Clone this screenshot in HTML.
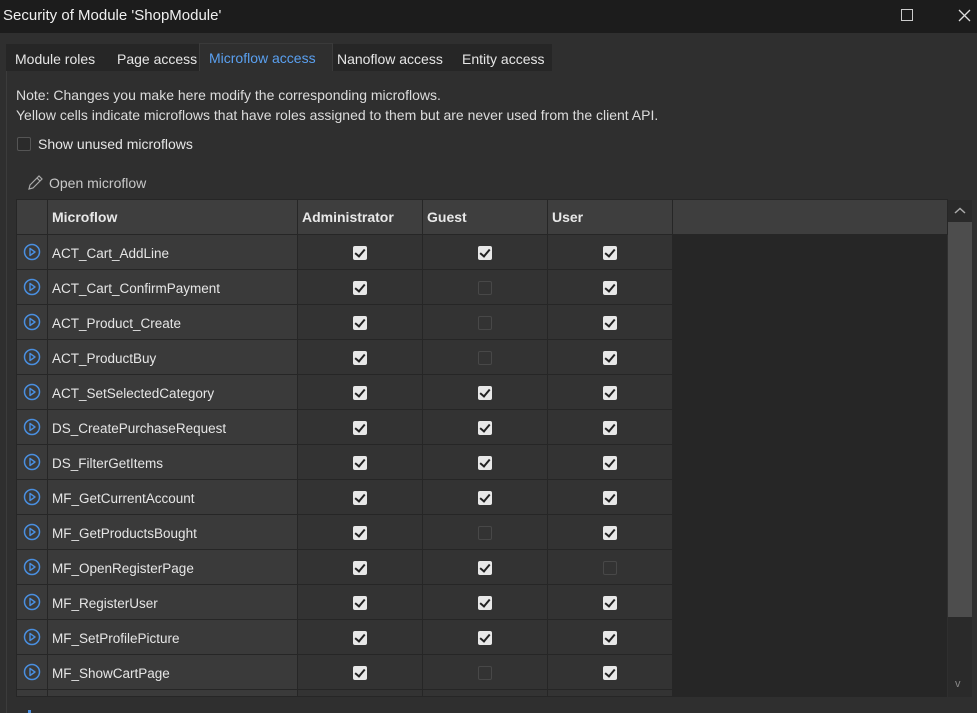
<!DOCTYPE html>
<html><head><style>
*{margin:0;padding:0;box-sizing:border-box}
body{width:977px;height:713px;background:#2f2f2f;font-family:"Liberation Sans",sans-serif;color:#e6e6e6;position:relative;overflow:hidden;font-size:14px}
.title{position:absolute;left:0;top:0;width:977px;height:33px;background:#1c1c1c;}
.title span{position:absolute;left:3px;top:7px;font-size:15px;color:#f0f0f0}
.tabs{position:absolute;left:6px;top:44px;height:27px;width:546px;background:#262626}
.tab{position:absolute;top:7px;font-size:14px;color:#e6e6e6}
.sel{position:absolute;left:193px;top:-1px;width:134px;height:28px;background:#2f2f2f;border:1px solid #3a3a3a;border-bottom:none}
.panel{position:absolute;left:6px;top:71px;width:971px;height:642px;border-left:1px solid #3c3c3c}
.txt{position:absolute;left:16px;font-size:14px;color:#dcdcdc}
.cb{position:absolute;left:17px;top:137px;width:14px;height:14px;border:1px solid #555;border-radius:2px;background:#2b2b2b}
table{position:absolute;left:16px;top:199px;border-collapse:collapse;}
td{height:35px;border:1px solid #262626;padding:0}
.hd td{height:35px;background:#3e3e3e;font-weight:bold;color:#e8e8e8;font-size:14px;padding-left:4px;border-color:#262626}
.ic{width:31px;background:#3a3a3a}
.nm{width:250px;background:#3a3a3a;padding-left:4px;padding-top:2px;font-size:13.5px;color:#e6e6e6}
.c{width:125px;background:#333;text-align:center}
.chk{display:inline-block;width:14px;height:14px;border-radius:2px;background:#e8e8e8;position:relative;vertical-align:middle}
.chk:after{content:"";position:absolute;left:4px;top:1px;width:4px;height:8px;border:solid #222;border-width:0 2px 2px 0;transform:rotate(40deg)}
.off{display:inline-block;width:14px;height:14px;border-radius:2px;border:1px solid #484848;vertical-align:middle}
.rest{position:absolute;left:672px;top:235px;width:275px;height:462px;background:#262626}
.scr{position:absolute;left:948px;top:200px;width:24px;height:497px;background:#2a2a2a}
.thumb{position:absolute;left:0;top:22px;width:24px;height:395px;background:#4d4d4d}
</style></head><body>
<div class="title"><span>Security of Module 'ShopModule'</span>
<div style="position:absolute;left:901px;top:9px;width:12px;height:12px;border:1px solid #ccc"></div>
<svg style="position:absolute;left:958px;top:9px" width="13" height="13" viewBox="0 0 13 13"><path d="M1 1 L12 12 M12 1 L1 12" stroke="#ddd" stroke-width="1.3"/></svg></div>
<div class="tabs"><div class="sel"></div>
<span class="tab" style="left:9px">Module roles</span>
<span class="tab" style="left:111px">Page access</span>
<span class="tab" style="left:203px;top:6px;color:#5aa0f0">Microflow access</span>
<span class="tab" style="left:331px">Nanoflow access</span>
<span class="tab" style="left:456px">Entity access</span></div>
<div class="panel"></div>
<div class="txt" style="top:87px">Note: Changes you make here modify the corresponding microflows.</div>
<div class="txt" style="top:107px">Yellow cells indicate microflows that have roles assigned to them but are never used from the client API.</div>
<div class="cb"></div><div class="txt" style="left:38px;top:136px;color:#e6e6e6">Show unused microflows</div>
<svg style="position:absolute;left:26px;top:174px" width="18" height="18" viewBox="0 0 18 18"><path d="M3 15 L4 11 L13 2 L16 5 L7 14 Z M11 4 L14 7" fill="none" stroke="#aaa" stroke-width="1.2"/></svg>
<div class="txt" style="left:49px;top:175px;color:#c8c8c8">Open microflow</div>
<div class="rest"></div>
<table>
<tr class="hd"><td style="width:31px;padding:0"></td><td style="width:250px">Microflow</td><td style="width:125px">Administrator</td><td style="width:125px">Guest</td><td style="width:125px">User</td><td style="width:275px"></td></tr>
</table>
<div class="scr"><div class="thumb"></div>
<svg style="position:absolute;left:6px;top:7px" width="12" height="8" viewBox="0 0 12 8"><path d="M1 6 L6 1.5 L11 6" fill="none" stroke="#aaa" stroke-width="1.5"/></svg>
<div style="position:absolute;left:7px;top:478px;font-size:11px;color:#888">v</div></div>
<div style="position:absolute;left:28px;top:710px;width:3px;height:3px;background:#4a8fe0"></div>
<script>
var d=[["ACT_Cart_AddLine",1,1,1],["ACT_Cart_ConfirmPayment",1,0,1],["ACT_Product_Create",1,0,1],["ACT_ProductBuy",1,0,1],["ACT_SetSelectedCategory",1,1,1],["DS_CreatePurchaseRequest",1,1,1],["DS_FilterGetItems",1,1,1],["MF_GetCurrentAccount",1,1,1],["MF_GetProductsBought",1,0,1],["MF_OpenRegisterPage",1,1,0],["MF_RegisterUser",1,1,1],["MF_SetProfilePicture",1,1,1],["MF_ShowCartPage",1,0,1]];
var ic='<svg width="18" height="18" viewBox="0 0 18 18"><circle cx="9" cy="9" r="7.5" fill="none" stroke="#4a8fe0" stroke-width="1.5"/><path d="M7 5.5 L12 9 L7 12.5 Z" fill="none" stroke="#4a8fe0" stroke-width="1.4" stroke-linejoin="round"/></svg>';
var h='';d.forEach(function(r){h+='<tr><td class="ic" style="text-align:center;padding-top:3px">'+ic+'</td><td class="nm">'+r[0]+'</td>';for(var i=1;i<4;i++)h+='<td class="c"><span class="'+(r[i]?'chk':'off')+'"></span></td>';h+='</tr>';});
h+='<tr><td class="ic" style="height:7px"></td><td class="nm" style="height:7px"></td><td class="c" style="height:7px"></td><td class="c" style="height:7px"></td><td class="c" style="height:7px"></td></tr>';
document.querySelector('table').insertAdjacentHTML('beforeend',h);
</script>
</body></html>
